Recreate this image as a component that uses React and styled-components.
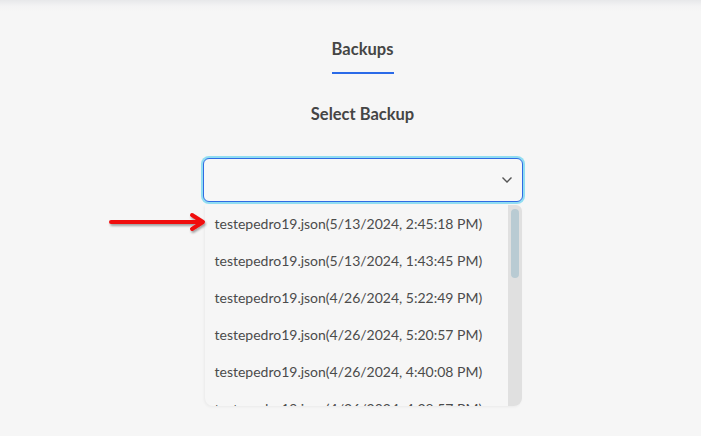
import styled, { createGlobalStyle } from 'styled-components';

const GlobalStyle = createGlobalStyle`
    html, body {
        margin: 0;
        padding: 0;
        background: #f6f6f6;
        font-family: "Lato", "Noto Sans", sans-serif;
    }
`;

const Page = styled.div`
    min-height: 436px;
    box-sizing: border-box;
    background: linear-gradient(#e7e8ea 0px, #f3f3f4 6px, #f6f6f6 12px);
    display: flex;
    flex-direction: column;
    align-items: center;
    padding-left: 24px;
`;

const Tab = styled.div`
    margin-top: 38px;
    display: flex;
    flex-direction: column;
    align-items: center;
`;

const TabLabel = styled.h2`
    margin: 0;
    font-size: 16.5px;
    font-weight: 700;
    line-height: 22px;
    color: #454545;
`;

const TabLine = styled.div`
    margin-top: 12px;
    height: 2px;
    width: 62px;
    background: #2a6ae8;
`;

const SectionTitle = styled.h3`
    margin: 29px 0 0;
    font-size: 16.5px;
    font-weight: 700;
    line-height: 22px;
    color: #454545;
`;

const SelectWrap = styled.div`
    position: relative;
    margin-top: 33px;
    width: 320px;
`;

const SelectBox = styled.div`
    height: 44px;
    box-sizing: border-box;
    border: 1px solid #2f6be3;
    border-radius: 6px;
    background: #f7f7f7;
    box-shadow: 0 0 0 2px rgba(110, 212, 240, 0.75);
    display: flex;
    align-items: center;
    justify-content: flex-end;
    padding-right: 9px;
`;

const Menu = styled.div`
    position: absolute;
    top: 47px;
    left: 2px;
    right: 1px;
    height: 201px;
    display: flex;
    background: #f6f6f6;
    border-radius: 0 0 8px 8px;
    box-shadow: -1px 1px 3px rgba(0, 0, 0, 0.05);
    overflow: hidden;
`;

const OptionList = styled.ul`
    flex: 1;
    margin: 0;
    padding: 0;
    list-style: none;
    overflow: hidden;
`;

const Option = styled.li`
    height: 37px;
    display: flex;
    align-items: center;
    padding-left: 10px;
    font-size: 14px;
    color: #4b4b4b;
    white-space: nowrap;
`;

const Track = styled.div`
    width: 14px;
    background: #e0e0e0;
    border-radius: 0 6px 6px 0;
    padding: 4px 3px 0;
    box-sizing: border-box;
`;

const Thumb = styled.div`
    height: 69px;
    border-radius: 4px;
    background: #b9cbd3;
`;

const Pointer = styled.svg`
    position: absolute;
    left: -95px;
    top: 54px;
    overflow: visible;
`;

const backups = [
    '5/13/2024, 2:45:18 PM',
    '5/13/2024, 1:43:45 PM',
    '4/26/2024, 5:22:49 PM',
    '4/26/2024, 5:20:57 PM',
    '4/26/2024, 4:40:08 PM',
    '4/26/2024, 4:38:57 PM',
];

export default function App() {
    return (
        <>
            <GlobalStyle />
            <Page>
                <Tab>
                    <TabLabel>Backups</TabLabel>
                    <TabLine />
                </Tab>
                <SectionTitle>Select Backup</SectionTitle>
                <SelectWrap>
                    <SelectBox>
                        <svg width="12" height="8" viewBox="0 0 12 8" fill="none">
                            <path d="M1.5 1.5 L6 6 L10.5 1.5" stroke="#555" strokeWidth="1.4" />
                        </svg>
                    </SelectBox>
                    <Menu>
                        <OptionList>
                            {backups.map((date) => (
                                <Option key={date}>testepedro19.json({date})</Option>
                            ))}
                        </OptionList>
                        <Track>
                            <Thumb />
                        </Track>
                    </Menu>
                    <Pointer width="98" height="20" viewBox="0 0 98 20">
                        <defs>
                            <filter id="sh" x="-10%" y="-50%" width="130%" height="220%">
                                <feDropShadow dx="1" dy="2" stdDeviation="1.2" floodColor="#000" floodOpacity="0.35" />
                            </filter>
                        </defs>
                        <g filter="url(#sh)" stroke="#f00a0a" strokeWidth="4" strokeLinecap="round" fill="none">
                            <path d="M3 10 H94" />
                            <path d="M84 3 L95 10 L84 17" strokeLinejoin="round" />
                        </g>
                    </Pointer>
                </SelectWrap>
            </Page>
        </>
    );
}
